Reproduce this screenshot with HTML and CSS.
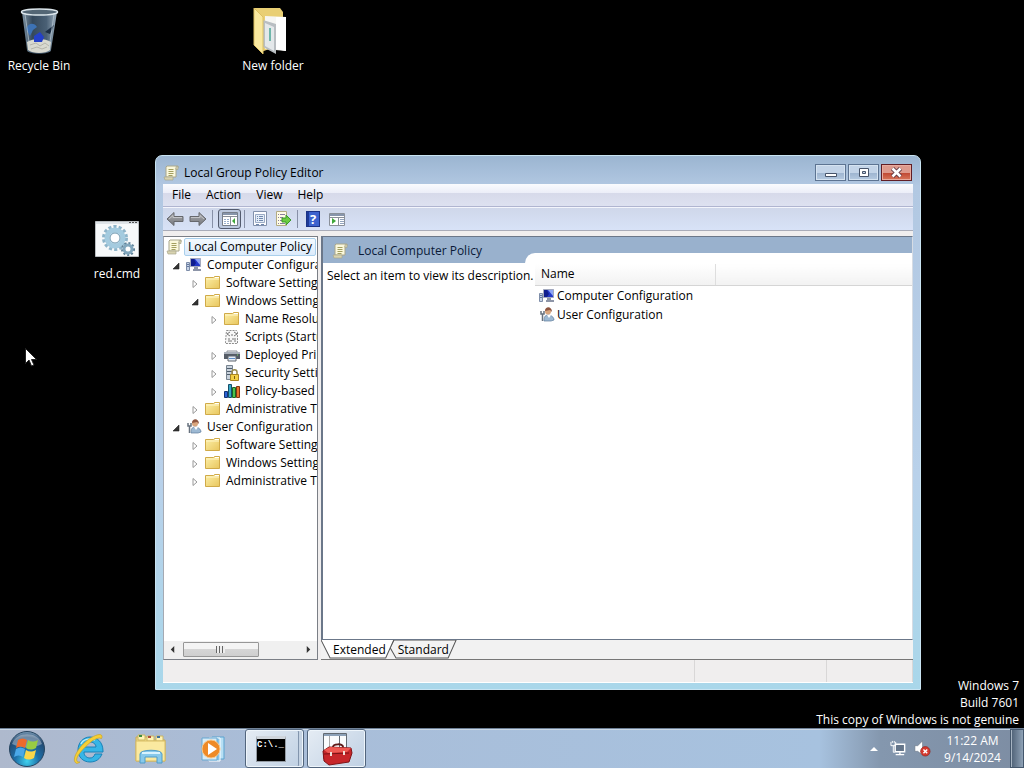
FILE: index.html
```html
<!DOCTYPE html>
<html lang="en">
<head>
  <meta charset="UTF-8" />
  <title>Local Group Policy Editor</title>
  <meta name="viewport" content="width=device-width, initial-scale=1.0" />
  <link rel="stylesheet" href="styles.css">
</head>
<body>
  <!-- shared icons -->
  <svg class="sprite" aria-hidden="true">
    <defs>
      <linearGradient id="gFolder" x1="0" y1="0" x2="1" y2="1">
        <stop offset="0" stop-color="#fdf0a8" /><stop offset="1" stop-color="#e8c65e" />
      </linearGradient>
      <linearGradient id="gArrow" x1="0" y1="0" x2="0" y2="1">
        <stop offset="0" stop-color="#a9abaf" /><stop offset="1" stop-color="#77797e" />
      </linearGradient>
      <symbol id="scroll" viewBox="0 0 16 16">
        <path d="M4 1h11v2h-2v9H3V2z" fill="#fbf8dc" stroke="#a9a68c" />
        <path d="M13 1.500h2v3h-2zM1 12h9v3H2z" fill="#d8d3b0" stroke="#a9a68c" stroke-width=".7" />
        <path d="M5.500 4.500h5M5.500 6.500h5M5.500 8.500h5M5.500 10.500h4" stroke="#a39f60" />
      </symbol>
      <symbol id="folder" viewBox="0 0 16 16">
        <path d="M.5 2.500h8l1-1h5v12H.5z" fill="url(#gFolder)" stroke="#d0aa48" />
        <path d="M1 4h13" stroke="#fff6c8" /><path d="M10 2.500h4" stroke="#fff" />
      </symbol>
      <symbol id="computer" viewBox="0 0 16 16">
        <path d="M4.500 1.500h10v8h-10z" fill="#2338c8" stroke="#a3a9bd" />
        <path d="M9 2h5v6z" fill="#8ea5f4" /><path d="M8 2l2 4-2 3H5V2z" fill="#101e8e" />
        <path d="M8 10h4v2h3v2H7v-2h1z" fill="#8d95a8" />
        <path d="M.5 5.500h3v8h-3z" fill="#c7d3e6" stroke="#7d8da8" /><path d="M1 7.500h2M1 9.500h2" stroke="#6378a0" />
      </symbol>
      <symbol id="user" viewBox="0 0 16 16">
        <path d="M5 14c0-4 1-6 4-6s6 2 6 5l-3 1z" fill="#9db9d3" stroke="#5f7d9c" stroke-width=".7" />
        <circle cx="9" cy="4.500" r="3" fill="#d9a57d" /><path d="M6 4c0-5 7-5 7 1l-2-2z" fill="#8d5540" />
        <path d="M2 4v3h3V4M3.500 7v7" fill="none" stroke="#67717e" stroke-width="1.500" />
        <path d="M8 8l2 3 2-3" fill="#fff" />
      </symbol>
      <symbol id="script" viewBox="0 0 16 16">
        <path d="M2.500 1.500h10l1 1v12h-12v-2z" fill="#f7f7f7" stroke="#8d8d8d" stroke-dasharray="2 1" />
        <path d="M6 3L3 5l3 2M10 3l3 2-3 2M7 6h2M4 10h2m2 0h4M4 12h4m2 0h2" fill="none" stroke="#777" />
      </symbol>
      <symbol id="printer" viewBox="0 0 16 16">
        <path d="M3 4h10v3H3z" fill="#f2f4f6" stroke="#8a8f96" /><path d="M0 6h16v6H0z" fill="#555c66" />
        <path d="M0 5h16v2H0z" fill="#a9b0ba" /><path d="M4 9h8v5H4z" fill="#e6eef7" stroke="#60666e" />
        <path d="M5 11.500h6" stroke="#5f8fc9" /><path d="M13 8h1" stroke="#7de05f" />
      </symbol>
      <symbol id="security" viewBox="0 0 16 16">
        <path d="M2.500.5h6v14h-6z" fill="#c9d2dc" stroke="#77838f" /><path d="M3 3.500h5M3 6.500h5M3 9.500h5" stroke="#4e5d6c" />
        <path d="M8 9V7c0-3 5-3 5 0v2" fill="none" stroke="#9a8a4b" stroke-width="1.500" />
        <path d="M6.500 9.500h8v6h-8z" fill="#f3cf43" stroke="#a98522" /><path d="M10.500 11v3" stroke="#7a5d10" />
      </symbol>
      <symbol id="bars" viewBox="0 0 16 16">
        <path d="M.5 8.500h3v6h-3z" fill="#2b62d6" stroke="#143575" /><path d="M4.500 1.500h3v13h-3z" fill="#35a8c8" stroke="#164f69" />
        <path d="M8.500 4.500h3v10h-3z" fill="#4cc34c" stroke="#1d6324" /><path d="M12.500 3.500h3v11h-3z" fill="#e8722c" stroke="#803611" />
      </symbol>
      <symbol id="collapsed" viewBox="0 0 8 8"><path d="M2 .5L6 4 2 7.500z" fill="#fff" stroke="#989898" /></symbol>
      <symbol id="expanded" viewBox="0 0 8 8"><path d="M7 1v6H1z" fill="#333" stroke="#222" stroke-width=".6" /></symbol>
      <symbol id="arrow" viewBox="0 0 18 16">
        <path d="M1 8l7-6.500v4h9v5H8v4z" fill="url(#gArrow)" stroke="#66686d" />
        <path d="M3 8l4-3.500v2h9" fill="none" stroke="#c3c4c7" />
      </symbol>
    </defs>
  </svg>

  <main class="desktop">
    <a class="shortcut recycle" href="#">
      <svg viewBox="0 0 48 48">
        <defs><linearGradient id="gBin"><stop offset="0" stop-color="#7f95a6" /><stop offset=".3" stop-color="#34485b" /><stop offset=".7" stop-color="#4a6075" /><stop offset="1" stop-color="#9fb1bf" /></linearGradient></defs>
        <path d="M7 5l5 38c0 5 24 5 24 0l6-38z" fill="url(#gBin)" />
        <path d="M12 35c6-4 18-4 24 0l-1 8c-4 4-18 4-22 0z" fill="#d9d9d0" />
        <path d="M15 38l6-2 4 3 5-3 4 3M16 42l6-2 5 2 5-2" fill="none" stroke="#b5b5ac" />
        <path d="M11 22c2-6 8-7 11-2l-4 3-3 6z" fill="#3d72b4" /><path d="M19 29l6-4 4 5-2 5h-8z" fill="#2440c8" />
        <path d="M30 25l9-7-4 9z" fill="#1a2c42" />
        <path d="M10 7l5 35M39 7l-5 35" stroke="#c7d5de" opacity=".6" />
        <ellipse cx="24.500" cy="5" rx="18" ry="3" fill="#536675" stroke="#dce6ec" stroke-width="1.500" />
      </svg>
      <span>Recycle Bin</span>
    </a>
    <a class="shortcut new-folder" href="#">
      <svg viewBox="0 0 48 48">
        <path d="M5 1h26l3 4v32L12 45z" fill="#e9cf74" />
        <path d="M16 9l21 1v34l-21-2z" fill="#f6f6f3" /><path d="M27 10l10 0v34l-10-2z" fill="#fff" />
        <path d="M14 13l13 4v30l-13-7z" fill="#b9bec2" /><path d="M16 16l9 4v24l-9-5z" fill="#e4e8ea" />
        <path d="M21 21v13" stroke="#6fb6aa" stroke-width="2" />
        <path d="M5 1l9 9v37L5 38z" fill="#fae99f" stroke="#dcc062" />
      </svg>
      <span>New folder</span>
    </a>
    <a class="shortcut red-cmd" href="#">
      <svg viewBox="0 0 48 48">
        <path d="M2.500 6.500h43v35h-43z" fill="#f7f9fa" stroke="#b9bdc0" /><path d="M3 7h42v2H3z" fill="#dfe4e8" /><path d="M36 7.500h8" stroke="#555" stroke-dasharray="2 1" />
        <circle cx="22" cy="23" r="11" fill="none" stroke="#8eb4c9" stroke-width="4" stroke-dasharray="3 2" />
        <circle cx="22" cy="23" r="8" fill="#edf5f9" stroke="#a4cbdf" stroke-width="5" /><circle cx="22" cy="23" r="5" fill="#fff" stroke="#7099b0" />
        <circle cx="35" cy="34" r="6" fill="none" stroke="#5e8197" stroke-width="2" stroke-dasharray="2 2" />
        <circle cx="35" cy="34" r="4" fill="#fff" stroke="#82a7bd" stroke-width="3" />
      </svg>
      <span>red.cmd</span>
    </a>

    <section class="window">
      <header class="titlebar">
        <svg class="icon"><use href="#scroll" /></svg>
        <h1>Local Group Policy Editor</h1>
        <div class="window-buttons">
          <button type="button" aria-label="Minimize"><svg viewBox="0 0 29 15"><path d="M9.500 8.500h11v3h-11z" fill="#fff" stroke="#47546a" /></svg></button>
          <button type="button" aria-label="Maximize"><svg viewBox="0 0 29 15"><path d="M10.500 3.500h9v8h-9zM13.500 6.500h3v2h-3z" fill="#fff" fill-rule="evenodd" stroke="#47546a" /></svg></button>
          <button type="button" class="close" aria-label="Close"><svg viewBox="0 0 29 15"><path d="M10.500 3.500l8 8M18.500 3.500l-8 8" stroke="#5b3540" stroke-width="4.500" /><path d="M10.500 3.500l8 8M18.500 3.500l-8 8" stroke="#fff" stroke-width="2.600" /></svg></button>
        </div>
      </header>

      <div class="client">
        <nav class="menubar">
          <button type="button">File</button>
          <button type="button">Action</button>
          <button type="button">View</button>
          <button type="button">Help</button>
        </nav>
        <div class="toolbar">
          <button type="button" aria-label="Back"><svg viewBox="0 0 18 16"><use href="#arrow" /></svg></button>
          <button type="button" aria-label="Forward"><svg class="flip" viewBox="0 0 18 16"><use href="#arrow" /></svg></button>
          <i class="separator"></i>
          <button type="button" class="pressed" aria-label="Show console tree"><svg viewBox="0 0 18 16"><path d="M1.500 1.500h15v13h-15z" fill="#fff" stroke="#777e8a" /><path d="M2 3h14" stroke="#8795ab" stroke-width="2" /><path d="M2 5.500h14M9.500 6v8" stroke="#8a8f99" /><path d="M3 8.500h5M3 10.500h5M3 12.500h5" stroke="#9bb0cd" stroke-dasharray="2 1" /><path d="M14 7v6l-3-3z" fill="#3fa73a" /></svg></button>
          <i class="separator"></i>
          <button type="button" aria-label="Properties"><svg viewBox="0 0 18 16"><path d="M2.500.5h13v14h-13z" fill="#fbfcff" stroke="#8291ac" /><path d="M4.500 3.500h9v8h-9z" fill="#e4edf8" stroke="#9aaac4" /><path d="M6 5.500h1m1 0h4M6 7.500h1m1 0h4M6 9.500h1m1 0h4M5 13.500h3m2 0h3" stroke="#6f87ad" /></svg></button>
          <button type="button" aria-label="Export list"><svg viewBox="0 0 18 16"><path d="M2.500.5h10v14h-10z" fill="#fffce6" stroke="#b3ab83" /><path d="M4 3.500h1m1 0h5M4 6.500h1m1 0h3M4 9.500h1m1 0h3M4 12.500h1m1 0h5" stroke="#8a7f9e" /><path d="M8 7h4V4l5 5-5 5v-3H8z" fill="#6bcb42" stroke="#3b9a29" /></svg></button>
          <i class="separator"></i>
          <button type="button" class="help" aria-label="Help">?</button>
          <button type="button" aria-label="Show action pane"><svg viewBox="0 0 18 16"><path d="M1.500 2.500h15v12h-15z" fill="#fff" stroke="#8a9099" /><path d="M2 4h14" stroke="#8795ab" stroke-width="2" /><path d="M2 6.500h14M10.500 7v8" stroke="#8a8f99" /><path d="M12 8.500h4M12 10.500h4M12 12.500h4" stroke="#93a4bd" /><path d="M4 7v6l4-3z" fill="#3fa73a" /></svg></button>
        </div>

        <div class="panes">
          <aside class="tree-pane">
            <ul class="tree">
              <li class="root"><svg class="icon"><use href="#scroll" /></svg><span class="selected">Local Computer Policy</span></li>
              <li><svg class="twisty"><use href="#expanded" /></svg><svg class="icon"><use href="#computer" /></svg><span>Computer Configuration</span></li>
              <li class="level-2"><svg class="twisty"><use href="#collapsed" /></svg><svg class="icon"><use href="#folder" /></svg><span>Software Settings</span></li>
              <li class="level-2"><svg class="twisty"><use href="#expanded" /></svg><svg class="icon"><use href="#folder" /></svg><span>Windows Settings</span></li>
              <li class="level-3"><svg class="twisty"><use href="#collapsed" /></svg><svg class="icon"><use href="#folder" /></svg><span>Name Resolution Policy</span></li>
              <li class="level-3"><svg class="twisty"></svg><svg class="icon"><use href="#script" /></svg><span>Scripts (Startup/Shutdown)</span></li>
              <li class="level-3"><svg class="twisty"><use href="#collapsed" /></svg><svg class="icon"><use href="#printer" /></svg><span>Deployed Printers</span></li>
              <li class="level-3"><svg class="twisty"><use href="#collapsed" /></svg><svg class="icon"><use href="#security" /></svg><span>Security Settings</span></li>
              <li class="level-3"><svg class="twisty"><use href="#collapsed" /></svg><svg class="icon"><use href="#bars" /></svg><span>Policy-based QoS</span></li>
              <li class="level-2"><svg class="twisty"><use href="#collapsed" /></svg><svg class="icon"><use href="#folder" /></svg><span>Administrative Templates</span></li>
              <li><svg class="twisty"><use href="#expanded" /></svg><svg class="icon"><use href="#user" /></svg><span>User Configuration</span></li>
              <li class="level-2"><svg class="twisty"><use href="#collapsed" /></svg><svg class="icon"><use href="#folder" /></svg><span>Software Settings</span></li>
              <li class="level-2"><svg class="twisty"><use href="#collapsed" /></svg><svg class="icon"><use href="#folder" /></svg><span>Windows Settings</span></li>
              <li class="level-2"><svg class="twisty"><use href="#collapsed" /></svg><svg class="icon"><use href="#folder" /></svg><span>Administrative Templates</span></li>
            </ul>
            <div class="scrollbar">
              <button type="button" aria-label="Scroll left"><svg viewBox="0 0 8 8"><path d="M6 0v8L2 4z" fill="#333" /></svg></button>
              <div class="track"><div class="thumb"></div></div>
              <button type="button" aria-label="Scroll right"><svg viewBox="0 0 8 8"><path d="M2 0v8l4-4z" fill="#333" /></svg></button>
            </div>
          </aside>

          <section class="result-pane">
            <div class="result">
              <div class="description">
                <h2><svg class="icon"><use href="#scroll" /></svg>Local Computer Policy</h2>
                <p>Select an item to view its description.</p>
              </div>
              <div class="list">
                <table>
                  <thead><tr><th class="name">Name</th><th></th></tr></thead>
                  <tbody>
                    <tr><td><svg class="icon"><use href="#computer" /></svg>Computer Configuration</td><td></td></tr>
                    <tr><td><svg class="icon"><use href="#user" /></svg>User Configuration</td><td></td></tr>
                  </tbody>
                </table>
              </div>
            </div>
            <div class="tabs">
              <button type="button" class="tab active"><svg viewBox="0 0 72 20" preserveAspectRatio="none"><path d="M0 0l9 19h55l8-19" fill="#fff" stroke="#555" /></svg><span>Extended</span></button>
              <button type="button" class="tab"><svg viewBox="0 0 68 20" preserveAspectRatio="none"><path d="M1 8l4-8h62l-8 19H7z" fill="#f3f3f3" stroke="#555" /></svg><span>Standard</span></button>
            </div>
          </section>
        </div>

        <footer class="statusbar"><span></span><span></span><span></span></footer>
      </div>
    </section>

    <div class="watermark">
      <p>Windows 7</p>
      <p>Build 7601</p>
      <p>This copy of Windows is not genuine</p>
    </div>

    <svg class="cursor" viewBox="0 0 12 19"><path d="M.5.5v15l3.500-3.500 2.500 6 2.500-1-2.500-5.500h5z" fill="#fff" stroke="#222" /></svg>
  </main>

  <footer class="taskbar">
    <button type="button" class="start" aria-label="Start">
      <svg viewBox="0 0 38 38">
        <defs><radialGradient id="gOrb" cx=".5" cy=".85" r=".85"><stop offset="0" stop-color="#3fd1ee" /><stop offset=".4" stop-color="#1d6fa8" /><stop offset=".8" stop-color="#234a72" /><stop offset="1" stop-color="#7f9fba" /></radialGradient></defs>
        <circle cx="19" cy="19" r="17.500" fill="url(#gOrb)" stroke="#26445f" />
        <path d="M4 14c4-13 26-13 30 0-8 4-20 5-30 0z" fill="#fff" opacity=".35" />
        <path d="M10 10c3-2 6-2 9 0l-2 8c-3-2-6-2-9 0z" fill="#ee6a2b" /><path d="M20 10c3 2 6 2 10 0l-2 8c-4 2-7 2-10 0z" fill="#98cc43" />
        <path d="M8 19c3-2 6-2 9 0l-2 8c-3-2-6-2-9 0z" fill="#4aa8e8" /><path d="M18 20c3 2 6 2 10 0l-2 8c-4 2-7 2-10 0z" fill="#fbd649" />
      </svg>
    </button>
    <button type="button" class="task" aria-label="Internet Explorer">
      <svg viewBox="0 0 34 34">
        <path d="M30 22c-2 5-6 8-12 8C11 30 6 25 6 18S11 5 18 5s13 5 13 14v1H12c0 4 3 6 6 6 2 0 4-1 5-4zM12 15h12c0-3-3-5-6-5s-6 2-6 5z" fill="#36b5e6" stroke="#1882b8" fill-rule="evenodd" />
        <path d="M9 12c2-5 9-6 14-4" fill="none" stroke="#b8ecfb" stroke-width="1.500" />
        <path d="M4 31C-1 28 6 15 17 7c6-4 12-6 13-3 0 1 0 2-1 3 0-2-4-1-9 2C10 17 3 26 5 29c0 1 2 1 3 1-2 1-3 2-4 1z" fill="#f5cf36" stroke="#c49c20" stroke-width=".6" />
      </svg>
    </button>
    <button type="button" class="task" aria-label="Windows Explorer">
      <svg viewBox="0 0 34 34">
        <path d="M2 5h12l2 3h15v21H2z" fill="#f1dc83" stroke="#caa957" /><path d="M4 3h7v5H4zM13 4h7v5h-7zM22 4h7v5h-7z" fill="#fff3b5" stroke="#c8b464" />
        <path d="M5 4h3" stroke="#3d8b40" stroke-width="2" /><path d="M14 5h3" stroke="#b04a3a" stroke-width="2" /><path d="M23 5h3" stroke="#3d6fa0" stroke-width="2" />
        <path d="M2 9h29v20H2z" fill="#fae9a0" stroke="#d8bd65" />
        <path d="M6 31v-9c0-5 22-5 22 0v9h-5v-6H11v6z" fill="#87c9eb" stroke="#4f9cc9" /><path d="M8 21h18" stroke="#d8f3ff" stroke-width="2" />
      </svg>
    </button>
    <button type="button" class="task" aria-label="Windows Media Player">
      <svg viewBox="0 0 34 34">
        <path d="M16 5h12v22H16z" fill="#b7dff4" stroke="#5aa3d0" /><path d="M13 6h11v23H13z" fill="#86c2e6" stroke="#fff" /><path d="M6 6h15v22H6z" fill="#d6ebf7" stroke="#67a8d2" />
        <circle cx="15" cy="17" r="9" fill="#ee8a27" stroke="#f9c88a" /><path d="M12 11l9 6-9 6z" fill="#fff" />
      </svg>
    </button>
    <button type="button" class="task open stacked" aria-label="Command Prompt">
      <span class="console">C:\._</span>
    </button>
    <button type="button" class="task open" aria-label="Local Group Policy Editor">
      <svg viewBox="0 0 34 34">
        <path d="M3.500 1.500h16v25h-16zM19.500 1.500h7v18h-7z" fill="#fafcfd" stroke="#626a72" /><path d="M4 3h22" stroke="#8ca1b8" stroke-width="2" /><path d="M9.500 4v20" stroke="#aaa" />
        <path d="M13 18v-3c0-3 10-4 10 0v3" fill="none" stroke="#5d1a18" stroke-width="2" />
        <path d="M3 19l6-4 22 1 1 5-3 9-20 3-5-4z" fill="#c7262a" stroke="#7f1417" /><path d="M4 18l6-3 21 1-4 4-19 1z" fill="#ef5a53" /><path d="M4 22l25-1" stroke="#7b1416" /><path d="M11 20v4M24 19v4" stroke="#f0dfd8" stroke-width="2" />
      </svg>
    </button>

    <div class="tray">
      <svg class="chevron" viewBox="0 0 8 4"><path d="M0 4l4-4 4 4z" fill="#fff" /></svg>
      <svg viewBox="0 0 18 18"><path d="M5.500 4.500h10v8h-10z" fill="#64758a" stroke="#fff" stroke-width="1.500" /><path d="M10.500 13v2M6 15.500h9" stroke="#fff" stroke-width="1.500" /><path d="M1 2v4h5V2M3.500 6v7H5M2.500 1v2M4.500 1v2" fill="none" stroke="#fff" /></svg>
      <svg viewBox="0 0 18 18"><path d="M1 6h3l5-5v15l-5-4H1z" fill="#fff" stroke="#6d7887" stroke-width=".6" /><circle cx="12" cy="12" r="5" fill="#d6392f" stroke="#8d251f" stroke-width=".7" /><path d="M10 10l4 4M14 10l-4 4" stroke="#fff" stroke-width="1.500" /></svg>
      <div class="clock"><time>11:22 AM</time><time>9/14/2024</time></div>
      <button type="button" class="show-desktop" aria-label="Show desktop"></button>
    </div>
  </footer>
</body>
</html>
```
FILE: styles.css
```css
* {
  box-sizing: border-box;
  margin: 0;
  padding: 0;
}

body {
  display: flex;
  flex-direction: column;
  height: 100vh;
  overflow: hidden;
  background: #000;
  color: #000;
  font-family: "Open Sans", "Noto Sans", sans-serif;
  font-size: 12px;
  line-height: 18px;
}

button {
  border: none;
  background: none;
  color: inherit;
  font: inherit;
}

svg {
  display: block;
  flex: none;
}

.sprite {
  position: absolute;
  width: 0;
  height: 0;
}

.icon {
  width: 16px;
  height: 16px;
}

/* desktop */
.desktop {
  position: relative;
  flex: 1;
  min-height: 0;
}

.shortcut {
  position: absolute;
  display: flex;
  flex-direction: column;
  align-items: center;
  gap: 2px;
  width: 76px;
  color: #fff;
  text-align: center;
  text-decoration: none;
}

.shortcut svg {
  width: 48px;
  height: 48px;
}

.recycle {
  left: 1px;
  top: 7px;
}

.new-folder {
  left: 235px;
  top: 7px;
}

.red-cmd {
  left: 79px;
  top: 215px;
}

.watermark {
  position: absolute;
  right: 5px;
  bottom: 0;
  color: #fff;
  line-height: 17px;
  text-align: right;
}

.cursor {
  position: absolute;
  left: 25px;
  top: 348px;
  width: 12px;
  height: 19px;
}

/* window */
.window {
  position: absolute;
  top: 155px;
  right: 103px;
  bottom: 38px;
  left: 155px;
  display: flex;
  flex-direction: column;
  padding: 0 7px 6px;
  border: 1px solid #c9e4f2;
  border-radius: 7px 7px 0 0;
  background: linear-gradient(#9bb5d1, #b2c8e2 30px, #b9d1ea 60%, #a9d7ea);
}

.titlebar {
  display: flex;
  align-items: center;
  height: 28px;
  padding-top: 6px;
}

.titlebar h1 {
  flex: 1;
  margin-left: 5px;
  font-size: 12px;
  font-weight: normal;
}

.window-buttons {
  display: flex;
  gap: 2px;
  margin-right: 1px;
  padding-bottom: 1px;
}

.window-buttons button {
  width: 31px;
  height: 17px;
  border: 1px solid #5d7492;
  background: linear-gradient(#c3d4e8 50%, #9cb3cf 50%, #b5cae1);
  box-shadow: inset 0 0 0 1px #d5e3f1;
}

.window-buttons svg {
  width: 29px;
  height: 15px;
}

.window-buttons .close {
  border-color: #611e25;
  background: linear-gradient(#dd9a8d 50%, #be4530 50%, #d8765b);
  box-shadow: inset 0 0 0 1px #e8ab9e;
}

.client {
  display: flex;
  flex: 1;
  flex-direction: column;
  min-height: 0;
  background: #f0eeee;
}

.menubar {
  display: flex;
  gap: 1px;
  height: 23px;
  padding-left: 2px;
  border-bottom: 1px solid #b0b5d0;
  background: linear-gradient(#fafbfe, #eceef8 9px, #d7daea 9px, #dde1f0);
}

.menubar button {
  padding: 0 7px;
}

.toolbar {
  display: flex;
  align-items: center;
  height: 24px;
  border-top: 1px solid #f3f5fc;
  border-bottom: 1px solid #a9acb8;
  background: linear-gradient(#cfd7ea, #d8e2f7);
}

.toolbar button {
  display: flex;
  align-items: center;
  justify-content: center;
  width: 23px;
  height: 20px;
}

.toolbar svg {
  width: 18px;
  height: 16px;
}

.toolbar .flip {
  transform: scaleX(-1);
}

.toolbar .pressed {
  border: 1px solid #535b6e;
  border-radius: 3px;
  background: #bcc8de;
}

.toolbar .help {
  width: 14px;
  height: 16px;
  margin: 0 5px;
  border: 1px solid #1c3387;
  background: linear-gradient(90deg, #1e3b98 2px, #3d63ce 2px);
  color: #fff;
  font-size: 13px;
  font-weight: bold;
}

.separator {
  width: 1px;
  height: 18px;
  margin: 0 3px;
  background: #8790a7;
}

.separator:first-of-type {
  margin-right: 5px;
}

.panes {
  display: flex;
  flex: 1;
  gap: 3px;
  min-height: 0;
  margin-top: 5px;
}

.tree-pane {
  display: flex;
  flex-direction: column;
  width: 155px;
  border: 1px solid #7b7f86;
  border-left-color: #a5aab3;
  background: #fff;
}

.tree {
  flex: 1;
  overflow: hidden;
  padding-top: 1px;
  padding-left: 2px;
  list-style: none;
}

.tree li {
  display: flex;
  align-items: center;
  height: 18px;
  white-space: nowrap;
}

.tree .icon {
  margin-right: 5px;
}

.tree .root .icon {
  margin-right: 2px;
}

.tree .level-2 {
  padding-left: 19px;
}

.tree .level-3 {
  padding-left: 38px;
}

.twisty {
  width: 8px;
  height: 8px;
  margin: 2px 6px 0;
}

.selected {
  padding: 0 3px;
  border: 1px solid #a9cfeb;
  border-radius: 2px;
  background: linear-gradient(#f4f9fe, #dcebfb);
  line-height: 16px;
}

.scrollbar {
  display: flex;
  height: 18px;
  padding-bottom: 1px;
  background: #f0f0f0;
}

.scrollbar button {
  display: flex;
  align-items: center;
  justify-content: center;
  width: 17px;
}

.scrollbar svg {
  width: 7px;
  height: 7px;
}

.track {
  flex: 1;
  padding: 1px 2px;
}

.thumb {
  display: flex;
  align-items: center;
  justify-content: center;
  width: 66%;
  height: 15px;
  border: 1px solid #979797;
  border-radius: 1px;
  background: linear-gradient(#f4f4f4 45%, #d6d6d6 45%, #cfcfcf);
}

.thumb::before {
  content: "";
  width: 9px;
  height: 7px;
  background: repeating-linear-gradient(90deg, #666 0 1px, #eee 1px 3px);
}

.result-pane {
  display: flex;
  flex: 1;
  flex-direction: column;
  min-width: 0;
  border-bottom: 1px solid #777;
}

.result {
  display: flex;
  flex: 1;
  min-height: 0;
  border: 1px solid #6b7789;
  border-right-color: #d6dce4;
  border-left: 2px solid #6b7789;
  background: #99b1cd;
}

.description {
  width: 202px;
  background: #fff;
}

.description h2 {
  display: flex;
  align-items: center;
  gap: 10px;
  height: 26px;
  padding: 2px 0 0 9px;
  background: #99b1cd;
  color: #0a1a38;
  font-size: 12px;
  font-weight: normal;
}

/* the line may run on over the list's left margin */
.description p {
  position: relative;
  z-index: 1;
  padding: 4px 0 0 4px;
  white-space: nowrap;
}

.list {
  flex: 1;
  margin-top: 16px;
  padding: 11px 0 0 10px;
  border-top-left-radius: 10px;
  background: #fff;
}

.list table {
  width: 100%;
  border-collapse: collapse;
}

.list th {
  height: 21px;
  border-bottom: 1px solid #d5d5d5;
  background: linear-gradient(#fff, #f2f2f2);
  font-weight: normal;
  text-align: left;
}

.list .name {
  width: 180px;
  padding-left: 6px;
  border-right: 1px solid #dedede;
}

.list td {
  height: 19px;
  padding: 1px 0 0 4px;
}

.list td .icon {
  display: inline-block;
  margin-right: 2px;
  vertical-align: middle;
}

/* tabs */
.tabs {
  display: flex;
  height: 19px;
  background: #f2f2f2;
}

.tab {
  position: relative;
  padding: 1px 8px 0 9px;
}

.tab.active {
  z-index: 1;
  padding-left: 12px;
}

.tab + .tab {
  margin-left: -5px;
}

.tab svg {
  position: absolute;
  inset: 0;
  width: 100%;
  height: 100%;
}

.tab span {
  position: relative;
}

.statusbar {
  display: flex;
  height: 23px;
  border-bottom: 1px solid #fff;
}

.statusbar span {
  width: 86px;
  border-right: 1px solid #d9d7d7;
}

.statusbar span:first-child {
  flex: 1;
}

.statusbar span:nth-child(2) {
  width: 132px;
}

/* taskbar */
.taskbar {
  display: flex;
  height: 40px;
  border-top: 1px solid #6f8197;
  background: linear-gradient(90deg, #aeb9cd, #a9bdd8 25%, #a7c2df 80%, #8497ae 86%, #7d8da3);
  box-shadow: inset 0 1px #c9d7e6;
}

.taskbar .start {
  width: 56px;
  padding-left: 8px;
}

.start svg {
  width: 38px;
  height: 38px;
}

.task {
  display: flex;
  align-items: center;
  justify-content: center;
  width: 62px;
}

.task svg {
  width: 34px;
  height: 34px;
}

.task:nth-child(2),
.task:nth-child(3),
.task:nth-child(4) {
  padding-left: 4px;
}

.task.open {
  width: 59px;
  margin-left: 3px;
  border: 1px solid #52657d;
  border-radius: 3px;
  background: linear-gradient(135deg, #e5ecf4, #bfd0e3);
  box-shadow: inset 0 0 0 1px #eef5fb;
}

/* several windows behind one button */
.task.stacked {
  padding-right: 7px;
  box-shadow: inset 0 0 0 1px #eef5fb, inset -4px 0 #c5d3e3, inset -5px 0 #8295ad;
}

.console {
  width: 30px;
  height: 26px;
  border: 1px solid #949ba3;
  border-top: 3px solid #cfd5dc;
  background: #000;
  color: #fff;
  font: bold 9px/12px "Liberation Mono", monospace;
  text-align: left;
}

.tray {
  display: flex;
  align-items: center;
  gap: 7px;
  margin-left: auto;
  color: #fff;
}

.tray svg {
  width: 17px;
  height: 17px;
}

.tray .chevron {
  width: 8px;
  height: 4px;
  margin-right: 5px;
}

.clock {
  display: flex;
  flex-direction: column;
  width: 64px;
  margin-left: 1px;
  padding-left: 3px;
  line-height: 17px;
  text-align: center;
}

.show-desktop {
  align-self: stretch;
  width: 14px;
  border: 1px solid #44576c;
  background: linear-gradient(90deg, #4d6075, #8fa2b6);
  box-shadow: inset 1px 0 #a6b4c2;
}
```
